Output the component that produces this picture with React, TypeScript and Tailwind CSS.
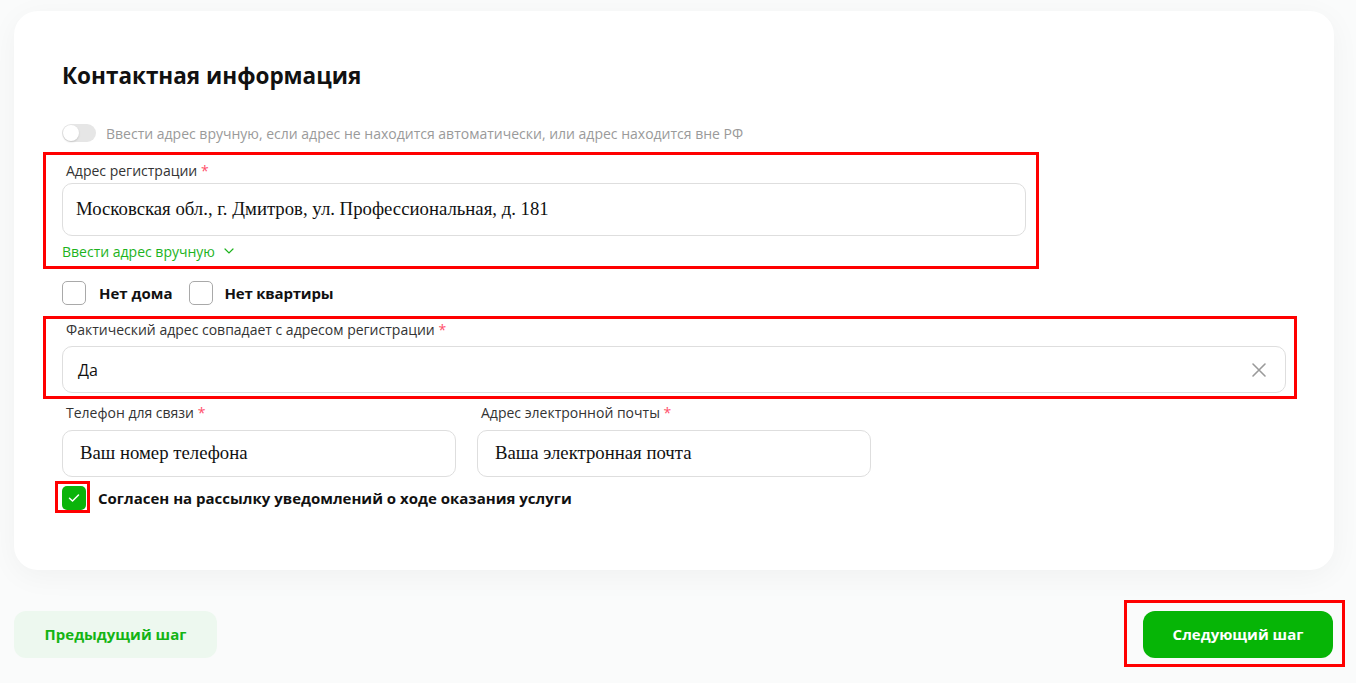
import React from "react";

const sans = { fontFamily: '"Open Sans", "Noto Sans", sans-serif' };
const serif = { fontFamily: '"Liberation Serif", "Times New Roman", serif' };

function Label({ children }: { children: React.ReactNode }) {
  return (
    <div className="pl-[4px] text-[14px] leading-[16px] text-[#333333]">
      {children} <span className="text-[#ff4f6b]">*</span>
    </div>
  );
}

function Check({ checked }: { checked?: boolean }) {
  if (checked) {
    return (
      <div className="w-[24px] h-[24px] rounded-[5px] bg-[#0ab40a] flex items-center justify-center shrink-0">
        <svg width="12" height="10" viewBox="0 0 12 10" fill="none">
          <path d="M1.5 5.2L4.5 8L10.5 2" stroke="white" strokeWidth="1.5" strokeLinecap="round" strokeLinejoin="round" />
        </svg>
      </div>
    );
  }
  return <div className="w-[24px] h-[24px] rounded-[5px] border border-[#a9a9a9] bg-white shrink-0" />;
}

export default function App() {
  return (
    <div className="min-h-[683px] bg-[#fafbfb] pt-[11px] pl-[14px]" style={sans}>
      <div className="w-[1320px] bg-white rounded-[24px] shadow-[0_6px_30px_rgba(0,0,0,0.045)] pt-[53px] pb-[60px] px-[48px] flex flex-col">
        <h1 className="text-[22.5px] leading-[24px] font-bold text-[#111111]">Контактная информация</h1>

        <div className="mt-[36px] flex items-center gap-[10px] h-[18px]">
          <div className="w-[34px] h-[18px] rounded-full bg-[#e6e6e6] relative">
            <div className="absolute left-[1px] top-[1px] w-[16px] h-[16px] rounded-full bg-white shadow-[0_1px_2px_rgba(0,0,0,0.15)]" />
          </div>
          <span className="text-[14px] text-[#9a9a9a]">
            Ввести адрес вручную, если адрес не находится автоматически, или адрес находится вне РФ
          </span>
        </div>

        <div className="relative mt-[21px]">
          <div className="absolute top-[-11px] left-[-19px] w-[996px] h-[117px] border-[3px] border-[#ff0000] pointer-events-none" />
          <Label>Адрес регистрации</Label>
          <div className="mt-[4px] w-[964px] h-[53px] rounded-[10px] border border-[#dedede] flex items-center px-[13px]">
            <span className="text-[18.75px] text-[#111111]" style={serif}>
              Московская обл., г. Дмитров, ул. Профессиональная, д. 181
            </span>
          </div>
          <div className="mt-[7px] flex items-center gap-[9px] h-[16px] text-[14px] text-[#1db31d]">
            <span>Ввести адрес вручную</span>
            <svg width="10" height="6" viewBox="0 0 10 6" fill="none">
              <path d="M1 1L5 5L9 1" stroke="#1db31d" strokeWidth="1.2" strokeLinecap="round" />
            </svg>
          </div>
        </div>

        <div className="mt-[22px] flex items-center h-[24px]">
          <Check />
          <span className="ml-[13px] text-[15px] font-bold text-[#111111]">Нет дома</span>
          <div className="ml-[16px]">
            <Check />
          </div>
          <span className="ml-[12px] text-[15px] font-bold text-[#111111] tracking-[-0.2px]">Нет квартиры</span>
        </div>

        <div className="relative mt-[17px]">
          <div className="absolute top-[-6px] left-[-19px] w-[1254px] h-[83px] border-[3px] border-[#ff0000] pointer-events-none" />
          <Label>Фактический адрес совпадает с адресом регистрации</Label>
          <div className="mt-[8px] w-full h-[47px] rounded-[10px] border border-[#dedede] flex items-center justify-between pl-[15px] pr-[18px]">
            <span className="text-[16px] text-[#111111]">Да</span>
            <svg width="16" height="16" viewBox="0 0 16 16" fill="none">
              <path d="M2 2L14 14M14 2L2 14" stroke="#9a9a9a" strokeWidth="1.6" strokeLinecap="round" />
            </svg>
          </div>
        </div>

        <div className="mt-[12px] flex gap-[21px]">
          <div className="w-[394px]">
            <Label>Телефон для связи</Label>
            <div className="mt-[9px] h-[47px] rounded-[10px] border border-[#dedede] flex items-center px-[17px]">
              <span className="text-[18.75px] text-[#111111]" style={serif}>
                Ваш номер телефона
              </span>
            </div>
          </div>
          <div className="w-[394px]">
            <Label>Адрес электронной почты</Label>
            <div className="mt-[9px] h-[47px] rounded-[10px] border border-[#dedede] flex items-center px-[17px]">
              <span className="text-[18.75px] text-[#111111]" style={serif}>
                Ваша электронная почта
              </span>
            </div>
          </div>
        </div>

        <div className="mt-[9px] flex items-center h-[24px]">
          <div className="relative">
            <div className="absolute top-[-5px] left-[-7px] w-[35px] h-[32px] border-[3px] border-[#ff0000] pointer-events-none" />
            <Check checked />
          </div>
          <span className="ml-[12px] text-[15px] font-bold text-[#111111]">
            Согласен на рассылку уведомлений о ходе оказания услуги
          </span>
        </div>
      </div>

      <div className="w-[1319px] mt-[41px] flex justify-between">
        <button className="w-[203px] h-[47px] rounded-[12px] bg-[#edf8ef] text-[15px] font-bold text-[#14b414]">
          Предыдущий шаг
        </button>
        <div className="relative">
          <div className="absolute top-[-11px] left-[-19px] w-[221px] h-[67px] border-[3px] border-[#ff0000] pointer-events-none" />
          <button className="w-[190px] h-[47px] rounded-[12px] bg-[#06b506] text-[15px] font-bold text-white">
            Следующий шаг
          </button>
        </div>
      </div>
    </div>
  );
}
